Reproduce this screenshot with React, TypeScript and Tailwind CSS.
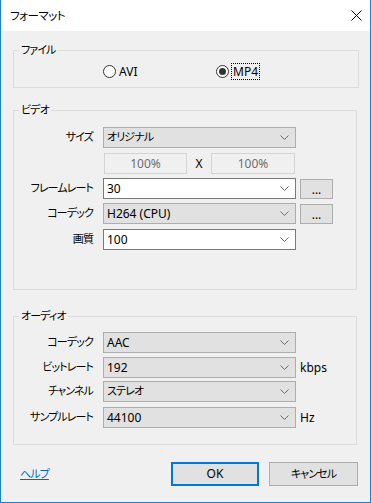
import type { ReactNode } from "react";

// narrower kana, closer to Meiryo UI
const jp = "text-[11px] tracking-[-0.9px]";

function Chevron() {
  return (
    <svg width="9" height="5" viewBox="0 0 9 5" className="shrink-0">
      <polyline points="0.5,0.5 4.5,4.5 8.5,0.5" fill="none" stroke="#6b6b6b" strokeWidth="1" />
    </svg>
  );
}

function Combo({ value, editable = false, ja = false }: { value: string; editable?: boolean; ja?: boolean }) {
  return (
    <div
      className={
        editable
          ? "flex h-[21px] w-[193px] items-center justify-between border border-[#7a7a7a] bg-white pl-[3px] pr-[6px]"
          : "flex h-[21px] w-[193px] items-center justify-between border border-[#adadad] bg-[#e1e1e1] pl-[3px] pr-[6px]"
      }
    >
      <span className={ja ? jp : ""}>{value}</span>
      <Chevron />
    </div>
  );
}

function Row({ label, children, className = "" }: { label: string; children: ReactNode; className?: string }) {
  return (
    <div className={`flex h-[21px] items-center ${className}`}>
      <div className={`w-[79px] text-right ${jp}`}>{label}</div>
      <div className="ml-[10px] flex items-center">{children}</div>
    </div>
  );
}

function MoreButton() {
  return (
    <div className="ml-[4px] flex h-[20px] w-[33px] items-center justify-center border border-[#adadad] bg-[#e1e1e1] pt-[2px] leading-none">
      ...
    </div>
  );
}

function Radio({ label, checked = false }: { label: string; checked?: boolean }) {
  return (
    <div className="flex items-center">
      <div className="flex h-[13px] w-[13px] items-center justify-center rounded-full border border-[#333] bg-white">
        {checked && <div className="h-[7px] w-[7px] rounded-full bg-[#333]" />}
      </div>
      <span
        className={
          checked
            ? "ml-[2px] border border-dotted border-black px-[1px] leading-[15px]"
            : "ml-[2px] px-[1px] leading-[15px]"
        }
      >
        {label}
      </span>
    </div>
  );
}

export default function App() {
  return (
    <div className="flex h-[503px] w-[371px] flex-col border-x border-b border-[#1883d7] bg-[#f0f0f0] font-['Noto_Sans','Noto_Sans_CJK_JP',sans-serif] text-[12px] text-black [font-feature-settings:'palt']">
      <div className="flex h-[31px] shrink-0 items-center justify-between bg-white pl-[9px] pr-[8px]">
        <span className="text-[11.5px] tracking-[-0.5px]">フォーマット</span>
        <svg width="11" height="11" viewBox="0 0 11 11">
          <path d="M0.5 0.5 L10.5 10.5 M10.5 0.5 L0.5 10.5" stroke="#000" strokeWidth="1" />
        </svg>
      </div>

      <div className="flex flex-col px-[12px]">
        <fieldset className="mt-[11px] w-[346px] border border-[#dcdcdc] px-0 pb-[7px]">
          <legend className={`ml-[5px] px-[2px] leading-[16px] ${jp}`}>ファイル</legend>
          <div className="mt-[5px] flex h-[17px] items-center pl-[89px]">
            <div className="w-[113px]">
              <Radio label="AVI" />
            </div>
            <Radio label="MP4" checked />
          </div>
        </fieldset>

        <fieldset className="mt-[14px] w-[344px] border border-[#dcdcdc] pb-[39px]">
          <legend className={`ml-[5px] px-[2px] leading-[16px] ${jp}`}>ビデオ</legend>
          <Row label="サイズ" className="mt-[9px]">
            <Combo value="オリジナル" ja />
          </Row>
          <div className="mt-[5px] flex h-[21px] items-center pl-[90px]">
            <div className="flex h-[21px] w-[83px] items-center justify-center border border-[#d4d4d4] text-[#6d6d6d]">
              100%
            </div>
            <div className="w-[24px] text-center">X</div>
            <div className="flex h-[21px] w-[84px] items-center justify-center border border-[#d4d4d4] text-[#6d6d6d]">
              100%
            </div>
          </div>
          <Row label="フレームレート" className="mt-[4px]">
            <Combo value="30" editable />
            <MoreButton />
          </Row>
          <Row label="コーデック" className="mt-[4px]">
            <Combo value="H264 (CPU)" />
            <MoreButton />
          </Row>
          <Row label="画質" className="mt-[5px]">
            <Combo value="100" editable />
          </Row>
        </fieldset>

        <fieldset className="mt-[18px] w-[344px] border border-[#dcdcdc] pb-[16px]">
          <legend className={`ml-[5px] px-[2px] leading-[16px] ${jp}`}>オーディオ</legend>
          <Row label="コーデック" className="mt-[8px]">
            <Combo value="AAC" />
          </Row>
          <Row label="ビットレート" className="mt-[4px]">
            <Combo value="192" />
            <span className="ml-[4px]">kbps</span>
          </Row>
          <Row label="チャンネル" className="mt-[3px]">
            <Combo value="ステレオ" ja />
          </Row>
          <Row label="サンプルレート" className="mt-[5px]">
            <Combo value="44100" />
            <span className="ml-[4px]">Hz</span>
          </Row>
        </fieldset>

        <div className="mt-[17px] flex h-[24px] items-center">
          <span className={`ml-[7px] text-[#0066cc] underline ${jp}`}>ヘルプ</span>
          <div className="ml-auto flex gap-[10px]">
            <button className="flex h-[24px] w-[88px] items-center justify-center border-2 border-[#0078d7] bg-[#e1e1e1]">
              OK
            </button>
            <button className={`flex h-[24px] w-[89px] items-center justify-center border border-[#adadad] bg-[#e1e1e1] ${jp}`}>
              キャンセル
            </button>
          </div>
        </div>
      </div>
    </div>
  );
}
